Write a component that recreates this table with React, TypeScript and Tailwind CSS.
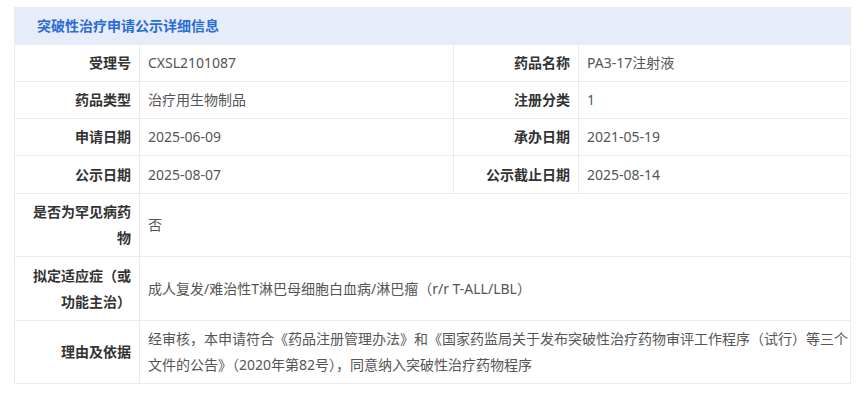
import React from "react";

type Cell = { label: string; value: string };

const pairs: [Cell, Cell][] = [
  [
    { label: "受理号", value: "CXSL2101087" },
    { label: "药品名称", value: "PA3-17注射液" },
  ],
  [
    { label: "药品类型", value: "治疗用生物制品" },
    { label: "注册分类", value: "1" },
  ],
  [
    { label: "申请日期", value: "2025-06-09" },
    { label: "承办日期", value: "2021-05-19" },
  ],
  [
    { label: "公示日期", value: "2025-08-07" },
    { label: "公示截止日期", value: "2025-08-14" },
  ],
];

const wide: Cell[] = [
  { label: "是否为罕见病药物", value: "否" },
  {
    label: "拟定适应症（或功能主治）",
    value: "成人复发/难治性T淋巴母细胞白血病/淋巴瘤（r/r T-ALL/LBL）",
  },
  {
    label: "理由及依据",
    value:
      "经审核，本申请符合《药品注册管理办法》和《国家药监局关于发布突破性治疗药物审评工作程序（试行）等三个文件的公告》（2020年第82号），同意纳入突破性治疗药物程序",
  },
];

const labelCls =
  "border border-[#ebebeb] px-2 py-[5px] text-right align-middle font-bold text-[#333333]";
const valueCls =
  "border border-[#ebebeb] pl-2 pr-0 py-[5px] text-left align-middle text-[#555555]";

export default function App() {
  return (
    <div
      className="min-h-[407px] bg-white px-[14px] pt-[7px]"
      style={{ fontFamily: '"Noto Sans", "Noto Sans CJK SC", sans-serif' }}
    >
      <table className="w-full table-fixed border-collapse text-[14px] leading-[26px]">
        <colgroup>
          <col className="w-[125px]" />
          <col className="w-[314px]" />
          <col className="w-[125px]" />
          <col />
        </colgroup>
        <tbody>
          <tr>
            <td
              colSpan={4}
              className="h-[37px] border border-[#ebebeb] bg-[#e6edf8] px-[22px] font-bold text-[#2a6bd6]"
            >
              突破性治疗申请公示详细信息
            </td>
          </tr>
          {pairs.map(([a, b], i) => (
            <tr key={a.label} className={i === 3 ? "h-[38px]" : "h-[37px]"}>
              <td className={labelCls}>{a.label}</td>
              <td className={valueCls}>{a.value}</td>
              <td className={labelCls}>{b.label}</td>
              <td className={valueCls}>{b.value}</td>
            </tr>
          ))}
          {wide.map((row, i) => (
            <tr key={row.label}>
              <td className={`${labelCls} ${i === 1 ? "h-[64px]" : "h-[63px]"}`}>{row.label}</td>
              <td colSpan={3} className={valueCls}>
                {row.value}
              </td>
            </tr>
          ))}
        </tbody>
      </table>
    </div>
  );
}
